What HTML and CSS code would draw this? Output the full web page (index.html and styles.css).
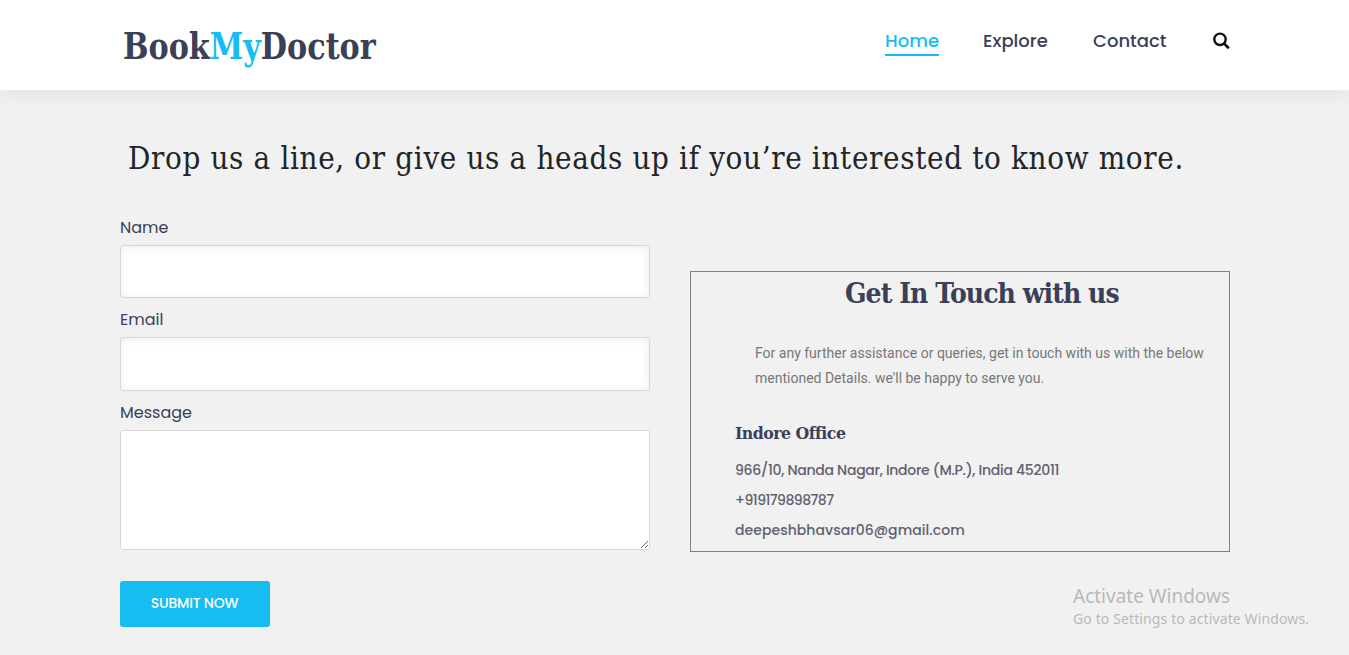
FILE: index.html
```html
<!DOCTYPE html>
<html lang="en">
<head>
<meta charset="utf-8">
<title>BookMyDoctor</title>
<link rel="stylesheet" href="styles.css">
</head>
<body>
<header class="header">
  <a class="logo">Book<span class="accent">My</span>Doctor</a>
  <nav class="nav">
    <a class="nav-link active">Home</a>
    <a class="nav-link explore">Explore</a>
    <a class="nav-link contact">Contact</a>
    <svg class="search" viewBox="0 0 18 18" width="18" height="18"><circle cx="7" cy="7.3" r="5.7" fill="none" stroke="#111" stroke-width="2.4"/><path d="M11.2 11.6L15.8 16.2" stroke="#111" stroke-width="2.7"/></svg>
  </nav>
</header>
<main class="main">
  <h1 class="headline">Drop us a line, or give us a heads up if you’re interested to know more.</h1>
  <div class="columns">
    <form class="form">
      <label class="label name" for="name">Name</label>
      <input class="field" id="name" type="text">
      <label class="label email" for="email">Email</label>
      <input class="field second" id="email" type="text">
      <label class="label message" for="message">Message</label>
      <textarea class="field area" id="message"></textarea>
      <button class="submit" type="button">SUBMIT NOW</button>
    </form>
    <section class="card">
      <h2 class="card-title">Get In Touch with us</h2>
      <p class="intro">For any further assistance or queries, get in touch with us with the below<br>mentioned Details. we'll be happy to serve you.</p>
      <h3 class="office">Indore Office</h3>
      <p class="line address">966/10, Nanda Nagar, Indore (M.P.), India 452011</p>
      <p class="line phone">+919179898787</p>
      <p class="line mail">deepeshbhavsar06@gmail.com</p>
    </section>
  </div>
</main>
<aside class="watermark">
  <div class="wm-title">Activate Windows</div>
  <div class="wm-text">Go to Settings to activate Windows.</div>
</aside>
</body>
</html>
```
FILE: styles.css
```css
* { box-sizing: border-box; }
body {
  margin: 0;
  height: 655px;
  overflow: hidden;
  background: #f1f1f1;
  color: #3a4058;
  font-family: Poppins, Inter, sans-serif;
}
h1, h2, h3, p { margin: 0; white-space: nowrap; }
.logo, .headline, .card-title, .office {
  font-family: "Roboto Slab", "DejaVu Serif Condensed", "DejaVu Serif", serif;
  font-stretch: condensed;
}
.header {
  height: 90px;
  padding: 0 118px 0 123px;
  display: flex;
  justify-content: space-between;
  background: #fff;
  box-shadow: 0 0 25px rgba(0, 0, 0, 0.09);
}
.logo {
  font-size: 37px;
  font-weight: 700;
  line-height: 92px;
  transform: scaleX(0.908);
  transform-origin: left;
}
.accent { color: #17bdf0; }
.nav { display: flex; padding-top: 25px; }
.nav-link {
  height: 31px;
  line-height: 31px;
  font-size: 18px;
  font-weight: 500;
  width: 54px;
  white-space: nowrap;
}
.nav-link.active { color: #17bdf0; border-bottom: 2px solid #17bdf0; }
.explore { width: 66px; margin-left: 44px; }
.contact { width: 75px; margin-left: 44px; }
.search { margin: 7px 0 0 45px; }
.main { padding: 0 119px 0 120px; }
.headline {
  margin: 48px 0 0 8px;
  line-height: 40px;
  font-size: 31px;
  font-weight: 400;
  letter-spacing: 0.66px;
  color: #212529;
}
.columns { display: flex; gap: 40px; padding-top: 37px; }
.form { width: 530px; display: flex; flex-direction: column; }
.label { height: 30px; line-height: 25px; font-size: 16px; }
.field {
  width: 530px;
  height: 53px;
  margin: 0 0 9px;
  border: 1px solid #d7d7d7;
  border-radius: 3px;
  background: #fff;
  box-shadow: inset 0 1px 8px rgba(0, 0, 0, 0.08);
}
.second { height: 54px; }
.area { height: 120px; margin-bottom: 31px; box-shadow: none; }
.submit {
  width: 150px;
  height: 46px;
  padding: 0 1px 1px 0;
  border: 0;
  border-radius: 3px;
  background: #17bdf0;
  color: #fff;
  font: 500 14px Poppins, Inter, sans-serif;
  letter-spacing: -0.2px;
}
.card {
  width: 540px;
  height: 281px;
  margin-top: 56px;
  padding-left: 44px;
  border: 1px solid #7f8181;
}
.card-title {
  margin-left: 110px;
  line-height: 44px;
  font-size: 28px;
  font-weight: 700;
  letter-spacing: -0.93px;
}
.intro {
  margin: 25px 0 0 20px;
  font: 14px/25px Roboto, sans-serif;
  color: #777;
}
.office {
  margin-top: 29px;
  line-height: 26px;
  font-size: 17.5px;
  font-weight: 700;
  letter-spacing: -0.5px;
}
.line { height: 30px; line-height: 30px; font-size: 14px; font-weight: 500; color: #626070; }
.address { margin-top: 9px; letter-spacing: -0.28px; }
.phone { letter-spacing: -0.55px; }
.mail { letter-spacing: 0.05px; }
.watermark {
  position: absolute;
  left: 1073px;
  top: 584px;
  font-family: "Segoe UI", "Noto Sans", "Open Sans", sans-serif;
  color: #b9b9b9;
  white-space: nowrap;
}
.wm-title { font-size: 19px; line-height: 24px; }
.wm-text { font-size: 14px; line-height: 22px; letter-spacing: 0.12px; }
```
